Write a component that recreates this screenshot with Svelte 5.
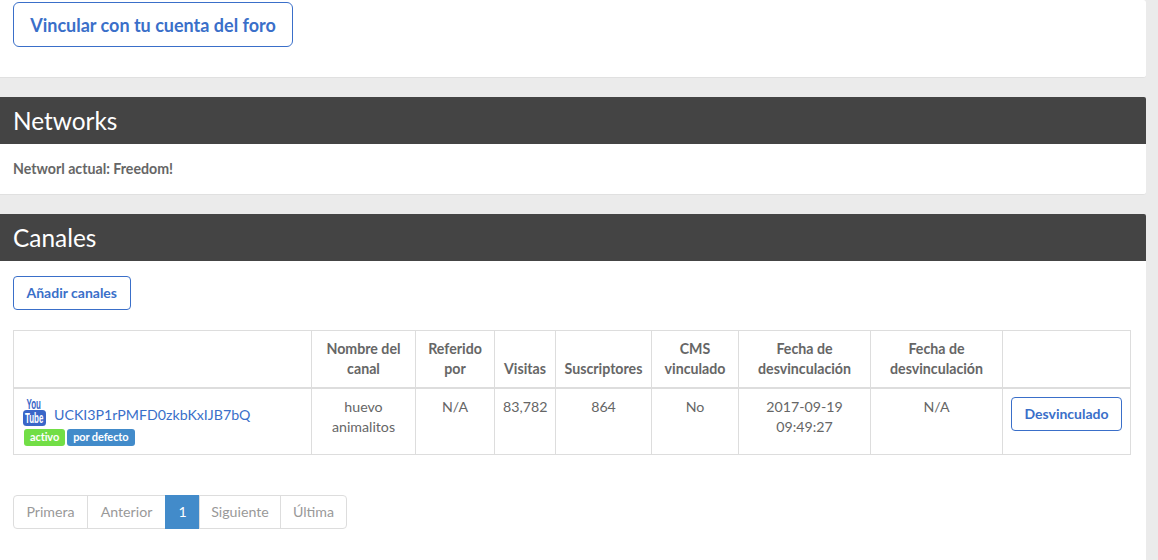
<script>
  const pages = ['Primera', 'Anterior', '1', 'Siguiente', 'Última'];
  const headers = [
    '',
    'Nombre del canal',
    'Referido por',
    'Visitas',
    'Suscriptores',
    'CMS vinculado',
    'Fecha de desvinculación',
    'Fecha de desvinculación',
    ''
  ];
</script>

<div class="page">
  <section class="panel first">
    <button class="btn btn-lg">Vincular con tu cuenta del foro</button>
  </section>

  <section class="panel">
    <h2>Networks</h2>
    <div class="body network">Networl actual: Freedom!</div>
  </section>

  <section class="panel last">
    <h2>Canales</h2>
    <div class="body">
      <button class="btn btn-sm">Añadir canales</button>

      <table>
        <colgroup>
          <col style="width:298px" />
          <col style="width:104px" />
          <col style="width:79px" />
          <col style="width:61px" />
          <col style="width:96px" />
          <col style="width:87px" />
          <col style="width:132px" />
          <col style="width:132px" />
          <col style="width:128px" />
        </colgroup>
        <thead>
          <tr>
            {#each headers as h}
              <th>{h}</th>
            {/each}
          </tr>
        </thead>
        <tbody>
          <tr>
            <td class="channel">
              <div class="channel-row">
                <svg class="yt" width="24" height="30" viewBox="0 0 24 30">
                  <text transform="translate(3.5 11.5) scale(.57 1)" class="you">You</text>
                  <rect x="0" y="13" width="23" height="16" rx="3.5" fill="#3a66c8" />
                  <text transform="translate(2 26) scale(.53 1)" class="tube">Tube</text>
                </svg>
                <a href="#channel">UCKI3P1rPMFD0zkbKxIJB7bQ</a>
              </div>
              <div class="labels">
                <span class="label green">activo</span>
                <span class="label blue">por defecto</span>
              </div>
            </td>
            <td>huevo animalitos</td>
            <td>N/A</td>
            <td>83,782</td>
            <td>864</td>
            <td>No</td>
            <td>2017-09-19 09:49:27</td>
            <td>N/A</td>
            <td class="action"><button class="btn btn-sm">Desvinculado</button></td>
          </tr>
        </tbody>
      </table>

      <ul class="pagination">
        {#each pages as p}
          <li class:active={p === '1'}>{p}</li>
        {/each}
      </ul>
    </div>
  </section>
</div>

<style>
  :global(body) {
    margin: 0;
    background: #ebebeb;
  }

  .page {
    width: 1146px;
    height: 560px;
    overflow: hidden;
    font-family: Lato, "Open Sans", sans-serif;
    font-size: 14.2px;
    line-height: 20px;
    color: #666;
  }

  .panel {
    background: #fff;
    margin-bottom: 19px;
    border-radius: 0 3px 3px 0;
    border-bottom: 1px solid #e0e0e0;
  }

  .first {
    padding: 2px 13px 0;
    box-sizing: border-box;
    height: 78px;
  }

  .last {
    margin-bottom: 0;
    height: 360px;
    border-bottom: 0;
  }

  h2 {
    margin: 0;
    height: 47px;
    padding: 0 13px;
    background: #444;
    color: #fff;
    font-size: 24.4px;
    font-weight: 400;
    line-height: 47px;
    border-radius: 0 2px 0 0;
  }

  .body {
    padding: 15px 13px;
  }

  .network {
    height: 50px;
    box-sizing: border-box;
    font-weight: 700;
  }

  .btn {
    display: block;
    font-family: inherit;
    font-weight: 700;
    color: #3a6fc9;
    background: #fff;
    border: 1px solid #3a6fc9;
    border-radius: 4px;
    cursor: pointer;
  }

  .btn-lg {
    width: 280px;
    height: 45px;
    padding: 0;
    font-size: 18px;
    border-radius: 6px;
  }

  .btn-sm {
    height: 34px;
    padding: 0 12.5px 1px;
    font-size: 14px;
  }

  table {
    table-layout: fixed;
    width: 1117px;
    margin-top: 20px;
    border-collapse: collapse;
  }

  th,
  td {
    border: 1px solid #ddd;
    padding: 8px;
    text-align: center;
    vertical-align: top;
  }

  th {
    vertical-align: bottom;
    border-bottom-width: 2px;
    font-weight: 700;
  }

  td.channel {
    text-align: left;
    padding: 8px 8px 8px 9px;
    height: 49px;
  }

  .channel-row {
    display: flex;
    align-items: flex-end;
    gap: 7px;
    height: 30px;
  }

  .yt {
    display: block;
    flex: none;
    overflow: visible;
  }

  .you,
  .tube {
    font-family: "Liberation Sans", sans-serif;
    font-weight: 700;
  }

  .you {
    font-size: 14px;
    fill: #3a66c8;
  }

  .tube {
    font-size: 15px;
    fill: #fff;
  }

  a {
    color: #3a6fc9;
    text-decoration: none;
    line-height: 24px;
  }

  .labels {
    display: flex;
    gap: 2px;
    margin-top: 2px;
    margin-left: 1px;
  }

  .label {
    height: 17px;
    padding: 0 6px;
    border-radius: 3px;
    color: #fff;
    font-size: 11px;
    font-weight: 700;
    line-height: 16px;
    letter-spacing: -0.1px;
  }

  .green {
    background: #72de46;
  }

  .blue {
    background: #428bca;
  }

  .action .btn {
    width: 111px;
    padding: 0 0 1px;
  }

  .pagination {
    display: flex;
    list-style: none;
    margin: 40px 0 0;
    padding: 0;
  }

  .pagination li {
    box-sizing: content-box;
    padding: 6px 0;
    border: 1px solid #ddd;
    margin-left: -1px;
    color: #999;
    height: 20px;
    text-align: center;
  }

  .pagination li:nth-child(1) {
    width: 73px;
    margin-left: 0;
    border-radius: 4px 0 0 4px;
  }

  .pagination li:nth-child(2) {
    width: 77px;
  }

  .pagination li:nth-child(3) {
    width: 33px;
  }

  .pagination li:nth-child(4) {
    width: 80px;
  }

  .pagination li:nth-child(5) {
    width: 65px;
    border-radius: 0 4px 4px 0;
  }

  .pagination li.active {
    background: #428bca;
    border-color: #428bca;
    color: #fff;
  }
</style>
